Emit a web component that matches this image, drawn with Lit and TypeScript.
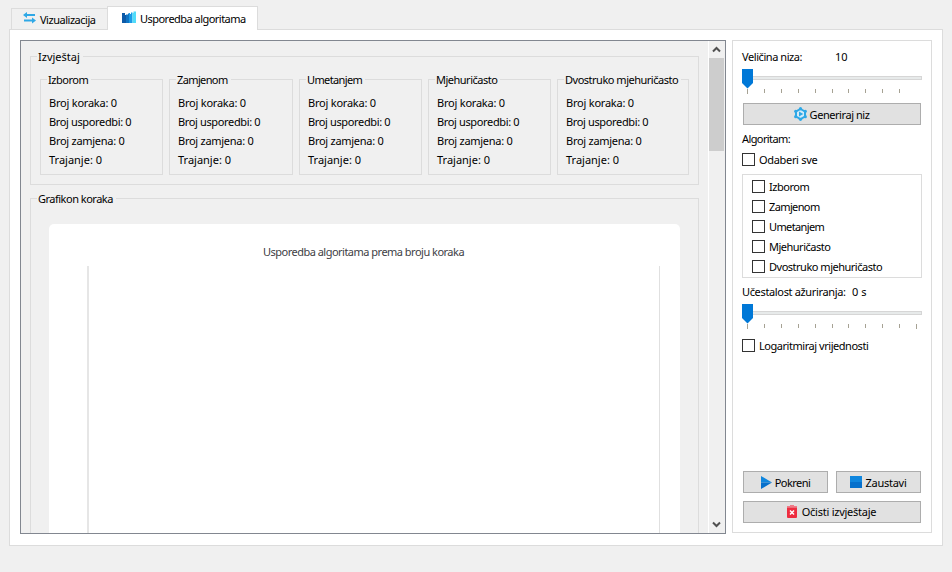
import { LitElement, html, css, svg } from "lit";
import { customElement, property } from "lit/decorators.js";
import { styleMap } from "lit/directives/style-map.js";

const tracking: Record<string, number> = {
  "Vizualizacija": -0.48,
  "Usporedba algoritama": -0.53,
  "Izborom": -0.48,
  "Zamjenom": -0.62,
  "Umetanjem": -0.62,
  "Mjehuričasto": -0.5,
  "Dvostruko mjehuričasto": -0.49,
  "Broj koraka: 0": -0.22,
  "Broj usporedbi: 0": -0.36,
  "Broj zamjena: 0": -0.27,
  "Grafikon koraka": -0.5,
  "Usporedba algoritama prema broju koraka": -0.51,
  "Veličina niza:": -0.43,
  "Generiraj niz": -0.44,
  "Algoritam:": -0.6,
  "Odaberi sve": -0.32,
  "Učestalost ažuriranja:": -0.35,
  "Logaritmiraj vrijednosti": -0.46,
  "Pokreni": -0.55,
  "Zaustavi": -0.25,
  "Očisti izvještaje": -0.25,
};
const text = (t: string) => html`<span style=${styleMap({ letterSpacing: `${tracking[t] ?? 0}px` })}>${t}</span>`;

@customElement("group-box")
class GroupBox extends LitElement {
  @property() label = "";
  static styles = css`
    :host { display: block; position: relative; box-sizing: border-box; border: 1px solid #dcdcdc; }
    .legend { position: absolute; left: 6px; top: -8px; line-height: 15px; padding: 0 3px 0 1px; background: #f0f0f0; white-space: nowrap; }
  `;
  render() {
    return html`<span class="legend">${text(this.label)}</span><slot></slot>`;
  }
}

@customElement("check-item")
class CheckItem extends LitElement {
  @property() label = "";
  static styles = css`
    :host { display: flex; align-items: center; height: 13px; gap: 4px; white-space: nowrap; }
    .box { width: 13px; height: 13px; box-sizing: border-box; border: 1px solid #333; background: #fff; flex: none; }
    .text { line-height: 15px; }
  `;
  render() {
    return html`<span class="box"></span><span class="text">${text(this.label)}</span>`;
  }
}

@customElement("tick-slider")
class TickSlider extends LitElement {
  @property({ type: Number }) ticks = 10;
  static styles = css`
    :host { display: block; width: 180px; height: 27px; }
    svg { display: block; }
  `;
  render() {
    const xs = [5, 22, 39, 56, 73, 90, 106, 123, 140, 157, 174].slice(0, this.ticks);
    return html`<svg width="180" height="27" shape-rendering="crispEdges">
      <rect x="0.5" y="7.5" width="179" height="3" fill="#e7eaea" stroke="#d6d6d6"></rect>
      ${xs.map((x, i) => svg`<rect x=${x} y="20" width="1" height=${i === 0 || i === 10 ? 5 : 4} fill="#a6a294"></rect>`)}
      <path d="M0 0H11V14L5.5 19.5L0 14Z" fill="#0078d7" shape-rendering="auto"></path>
    </svg>`;
  }
}

const swapIcon = html`<svg width="13" height="12" viewBox="0 0 13 12" fill="#2fa8e6">
  <path d="M0 3L4 0V2H12V4H4V6Z"></path><path d="M13 8.5L9 5.5V7.5H1V9.5H9V11.5Z"></path></svg>`;
const chartIcon = html`<svg width="14" height="13" viewBox="0 0 14 13">
  <path d="M0 2H3V4H4V12H0Z" fill="#0d5aa7"></path><path d="M4 3.5H6V2.5H7V12H4Z" fill="#0f74c4"></path>
  <path d="M7 2H8V3H9V1.5H10.5V12H7Z" fill="#1c9be6"></path><path d="M10.5 2H11.5V0.5H14V12H10.5Z" fill="#50dcfa"></path></svg>`;
const gearIcon = html`<svg width="13" height="14" viewBox="0 0 13 14">
  <path d="M6.5 2L11 4.5V9.5L6.5 12L2 9.5V4.5Z" fill="#d3ebf8" stroke="#2fa8e6" stroke-width="2"></path>
  <g fill="#2fa8e6"><circle cx="6.5" cy="1.7" r="1.6"></circle><circle cx="11.3" cy="4.3" r="1.6"></circle><circle cx="11.3" cy="9.7" r="1.6"></circle><circle cx="6.5" cy="12.3" r="1.6"></circle><circle cx="1.7" cy="9.7" r="1.6"></circle><circle cx="1.7" cy="4.3" r="1.6"></circle><path d="M5 4.5L9.3 7L5 9.5Z"></path></g></svg>`;
const playIcon = html`<svg width="11" height="13" viewBox="0 0 11 13"><path d="M0 0L11 6.5H0Z" fill="#0f86de"></path><path d="M0 13L11 6.5H0Z" fill="#0670cc"></path></svg>`;
const stopIcon = html`<svg width="12" height="12" viewBox="0 0 12 12"><path d="M0 0H12V6H0Z" fill="#0f86de"></path><path d="M0 6H12V12H0Z" fill="#0670cc"></path></svg>`;
const trashIcon = html`<svg width="10" height="13" viewBox="0 0 10 13"><path d="M3 0H7V1H10V2.5H0V1H3Z" fill="#f07a86"></path><path d="M0 2.5H10V12Q10 13 9 13H1Q0 13 0 12Z" fill="#ee2d40"></path><path d="M3 5.5L7 9.5M7 5.5L3 9.5" stroke="#fff" stroke-width="1.5"></path></svg>`;

const algorithms = [
  { name: "Izborom", width: 123 },
  { name: "Zamjenom", width: 124 },
  { name: "Umetanjem", width: 123 },
  { name: "Mjehuričasto", width: 123 },
  { name: "Dvostruko mjehuričasto", width: 132 },
];

@customElement("app-root")
class AppRoot extends LitElement {
  static styles = css`
    :host { display: flex; flex-direction: column; box-sizing: border-box; width: 952px; height: 572px; padding: 6px 9px 26px; background: #f0f0f0; overflow: hidden; color: #000; font: 11px/15px "Noto Sans", "Open Sans", sans-serif; }
    svg { display: block; flex: none; }
    .tabs { display: flex; align-items: flex-end; height: 23px; padding-left: 2px; flex: none; }
    .tab { display: flex; align-items: center; box-sizing: border-box; white-space: nowrap; border: 1px solid #dcdcdc; border-bottom: 0; }
    .tab svg { margin-bottom: 2px; }
    .tab.idle { width: 96px; height: 21px; border-right: 0; padding: 0 0 0 11px; gap: 4px; }
    .tab.active { width: 151px; height: 24px; margin-bottom: -1px; background: #fff; padding: 0 0 1px 14px; gap: 4px; z-index: 1; }
    .pane { display: flex; box-sizing: border-box; height: 517px; background: #fff; border: 1px solid #dcdcdc; padding: 10px; gap: 6px; width: 934px; }
    .scroll { display: flex; box-sizing: border-box; width: 706px; height: 494px; border: 1px solid #828790; background: #f0f0f0; }
    .content { width: 687px; flex: none; box-sizing: border-box; padding: 15px 9px 0; overflow: hidden; display: flex; flex-direction: column; gap: 13px; }
    .report { height: 129px; width: 669px; padding: 22px 9px 0; flex: none; }
    .cards { display: flex; gap: 6px; }
    .card { height: 96px; padding: 14px 0 0 8px; flex: none; }
    .row { height: 19px; line-height: 17px; white-space: nowrap; }
    .graph { height: 420px; width: 669px; flex: none; padding: 25px 18px 0; }
    .chart { height: 420px; width: 631px; box-sizing: border-box; background: #fff; border-radius: 5px; display: flex; flex-direction: column; padding: 20px 20px 0 38px; }
    .title { color: #404044; text-align: center; height: 22px; padding-right: 20px; }
    .plot { flex: 1; border-left: 2px solid #e6e6e6; border-right: 1px solid #e0e0e0; }
    .bar { width: 15px; display: flex; flex-direction: column; align-items: center; border-left: 1px solid #fff; }
    .arrow { height: 17px; width: 15px; }
    .thumb { height: 93px; width: 15px; background: #cdcdcd; }
    .space { flex: 1; }
    .side { box-sizing: border-box; width: 200px; height: 493px; border: 1px solid #dcdcdc; padding: 8px 9px 9px; display: flex; flex-direction: column; }
    .label { display: flex; height: 15px; white-space: nowrap; }
    .size { width: 93px; }
    .rate { width: 110px; }
    .size-slider { margin-top: 5px; }
    .rate-slider { margin-top: 5px; }
    .btn { box-sizing: border-box; height: 22px; border: 1px solid #adadad; background: #e1e1e1; display: flex; align-items: center; justify-content: center; gap: 3px; margin: 0 1px; white-space: nowrap; }
    .btn.clear { gap: 5px; padding-right: 1px; padding-bottom: 1px; }
    .generate { margin-top: 7px; padding-right: 1px; }
    .alg { margin-top: 6px; }
    .all { margin-top: 7px; }
    .list { box-sizing: border-box; height: 104px; border: 1px solid #dcdcdc; margin-top: 8px; padding: 5px 9px; display: flex; flex-direction: column; gap: 7px; }
    .update { margin-top: 6px; }
    .log { margin-top: 8px; }
    .pair { display: flex; gap: 8px; margin: 0 1px 8px; }
    .pair .btn { flex: 1; margin: 0; }
  `;
  render() {
    return html`
      <div class="tabs">
        <div class="tab idle">${swapIcon}${text("Vizualizacija")}</div>
        <div class="tab active">${chartIcon}${text("Usporedba algoritama")}</div>
      </div>
      <div class="pane">
        <div class="scroll">
          <div class="content">
            <group-box class="report" label="Izvještaj">
              <div class="cards">
                ${algorithms.map((a) => html`
                  <group-box class="card" label=${a.name} style=${styleMap({ width: `${a.width}px` })}>
                    ${["Broj koraka", "Broj usporedbi", "Broj zamjena", "Trajanje"].map((t) => html`<div class="row">${text(`${t}: 0`)}</div>`)}
                  </group-box>`)}
              </div>
            </group-box>
            <group-box class="graph" label="Grafikon koraka">
              <div class="chart">
                <div class="title">${text("Usporedba algoritama prema broju koraka")}</div>
                <div class="plot"></div>
              </div>
            </group-box>
          </div>
          <div class="bar">
            <svg class="arrow" viewBox="0 0 15 17"><path d="M4 10.5L7.5 7L11 10.5" fill="none" stroke="#505050" stroke-width="2"></path></svg>
            <div class="thumb"></div>
            <div class="space"></div>
            <svg class="arrow" viewBox="0 0 15 17"><path d="M4 6.5L7.5 10L11 6.5" fill="none" stroke="#505050" stroke-width="2"></path></svg>
          </div>
        </div>
        <div class="side">
          <div class="label"><span class="size">${text("Veličina niza:")}</span><span>10</span></div>
          <tick-slider class="size-slider" ticks="10"></tick-slider>
          <div class="btn generate">${gearIcon}${text("Generiraj niz")}</div>
          <div class="label alg">${text("Algoritam:")}</div>
          <check-item class="all" label="Odaberi sve"></check-item>
          <div class="list">${algorithms.map((a) => html`<check-item label=${a.name}></check-item>`)}</div>
          <div class="label update"><span class="rate">${text("Učestalost ažuriranja:")}</span><span>0 s</span></div>
          <tick-slider class="rate-slider" ticks="11"></tick-slider>
          <check-item class="log" label="Logaritmiraj vrijednosti"></check-item>
          <div class="space"></div>
          <div class="pair">
            <div class="btn">${playIcon}${text("Pokreni")}</div>
            <div class="btn">${stopIcon}${text("Zaustavi")}</div>
          </div>
          <div class="btn clear">${trashIcon}${text("Očisti izvještaje")}</div>
        </div>
      </div>`;
  }
}
